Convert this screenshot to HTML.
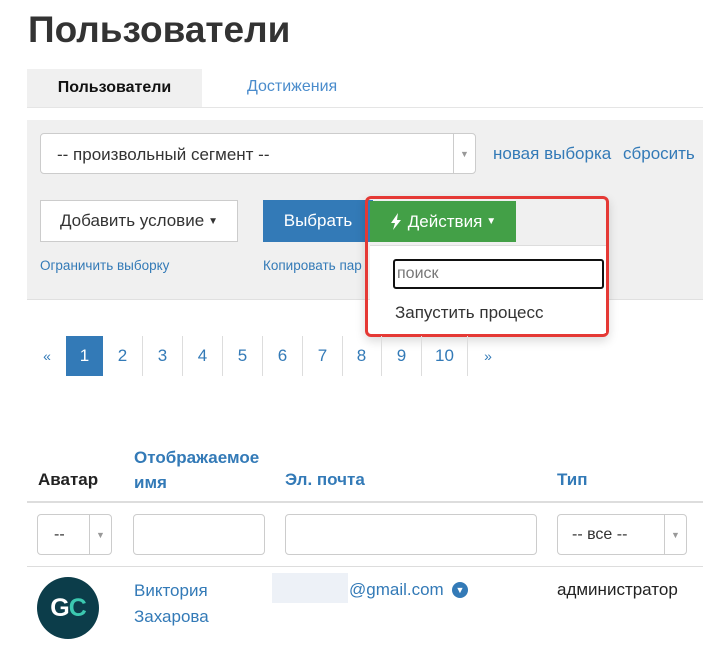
<!DOCTYPE html>
<html><head><meta charset="utf-8"><style>
*{box-sizing:border-box;margin:0;padding:0}
body{width:703px;height:649px;overflow:hidden;background:#fff;font-family:"Liberation Sans",sans-serif;position:relative;color:#333}
.a{position:absolute}
.blue{color:#337ab7}
.sel{position:absolute;background:#fff;border:1px solid #ccc;border-radius:4px}
.sel .ar{position:absolute;right:0;top:0;bottom:0;width:22px;border-left:1px solid #ccc;color:#999;font-size:9px;display:flex;align-items:center;justify-content:center}
.pg{position:absolute;top:336px;height:40px;width:40px;border-right:1px solid #ddd;color:#337ab7;font-size:17px;display:flex;align-items:center;justify-content:center}
</style></head><body>
<div class="a" style="left:28px;top:9px;font-size:37px;font-weight:bold;color:#333">Пользователи</div>
<div class="a" style="left:27px;top:69px;width:175px;height:38px;background:#f0f0f0;font-size:16px;font-weight:bold;color:#111;display:flex;align-items:center;justify-content:center">Пользователи</div>
<div class="a blue" style="left:247px;top:78px;font-size:16px;color:#4a8ccc">Достижения</div>
<div class="a" style="left:27px;top:107px;width:676px;height:1px;background:#e5e5e5"></div>
<div class="a" style="left:27px;top:120px;width:676px;height:180px;background:#f0f0f0;border-bottom:1px solid #e0e0e0"></div>
<div class="sel" style="left:40px;top:133px;width:436px;height:41px"><span class="a" style="left:16px;top:11px;font-size:17px;color:#333">-- произвольный сегмент --</span><div class="ar">▼</div></div>
<div class="a blue" style="left:493px;top:144px;font-size:17px">новая выборка</div>
<div class="a blue" style="left:623px;top:144px;font-size:17px;white-space:nowrap">сбросить</div>
<div class="a" style="left:40px;top:200px;width:198px;height:42px;background:#fff;border:1px solid #ccc;font-size:17px;color:#333;display:flex;align-items:center;justify-content:center">Добавить условие <span style="font-size:10px;margin-left:4px">▼</span></div>
<div class="a" style="left:263px;top:200px;width:110px;height:42px;background:#337ab7;color:#fff;font-size:17px;display:flex;align-items:center;justify-content:center">Выбрать</div>
<div class="a blue" style="left:40px;top:258px;font-size:13.5px">Ограничить выборку</div>
<div class="a blue" style="left:263px;top:258px;font-size:13.5px">Копировать пар</div>
<div class="a" style="left:365px;top:196px;width:244px;height:141px;border:3px solid #e53935;border-radius:6px;background:transparent;box-shadow:0 4px 10px rgba(0,0,0,.15)"></div>
<div class="a" style="left:370px;top:245px;width:236px;height:88px;background:#fff;border-top:1px solid #ddd"></div>
<div class="a" style="left:370px;top:201px;width:146px;height:41px;background:#43a047;color:#fff;font-size:17px;display:flex;align-items:center;justify-content:center"><svg width="12" height="17" viewBox="0 0 12 17" style="margin-right:6px"><path d="M8 0L1 10h4l-2 7 8-10H7z" fill="#fff"/></svg>Действия <span style="font-size:10px;margin-left:4px">▼</span></div>
<div class="a" style="left:393px;top:259px;width:211px;height:30px;border:2px solid #111;border-radius:3px;background:#fff;font-size:16px;color:#777;padding:4px 0 0 2px">поиск</div>
<div class="a" style="left:395px;top:303px;font-size:17px;color:#333">Запустить процесс</div>
<div class="pg" style="left:27px;color:#337ab7;border:none;font-size:14px">«</div>
<div class="pg" style="left:66px;width:37px;background:#337ab7;color:#fff;border:none">1</div>
<div class="pg" style="left:103px">2</div>
<div class="pg" style="left:143px">3</div>
<div class="pg" style="left:183px">4</div>
<div class="pg" style="left:223px">5</div>
<div class="pg" style="left:263px">6</div>
<div class="pg" style="left:303px">7</div>
<div class="pg" style="left:342px">8</div>
<div class="pg" style="left:382px">9</div>
<div class="pg" style="left:422px;width:46px">10</div>
<div class="pg" style="left:468px;border:none;font-size:14px">»</div>
<div class="a" style="left:38px;top:470px;font-size:17px;font-weight:bold;color:#222">Аватар</div>
<div class="a blue" style="left:134px;top:445px;font-size:17px;font-weight:bold;line-height:25px">Отображаемое<br>имя</div>
<div class="a blue" style="left:285px;top:470px;font-size:17px;font-weight:bold">Эл. почта</div>
<div class="a blue" style="left:557px;top:470px;font-size:17px;font-weight:bold">Тип</div>
<div class="a" style="left:27px;top:501px;width:676px;height:2px;background:#ddd"></div>
<div class="sel" style="left:37px;top:514px;width:75px;height:41px"><span class="a" style="left:16px;top:11px;font-size:16px">--</span><div class="ar">▼</div></div>
<div class="sel" style="left:133px;top:514px;width:132px;height:41px"></div>
<div class="sel" style="left:285px;top:514px;width:252px;height:41px"></div>
<div class="sel" style="left:557px;top:514px;width:130px;height:41px"><span class="a" style="left:14px;top:11px;font-size:16px">-- все --</span><div class="ar">▼</div></div>
<div class="a" style="left:27px;top:566px;width:676px;height:1px;background:#ddd"></div>
<div class="a" style="left:37px;top:577px;width:62px;height:62px;border-radius:50%;background:#0c3d4a;color:#fff;font-weight:bold;font-size:25px;display:flex;align-items:center;justify-content:center;letter-spacing:-1px">G<span style="color:#3cc9b0">C</span></div>
<div class="a blue" style="left:134px;top:578px;font-size:17px;line-height:26px">Виктория<br>Захарова</div>
<div class="a" style="left:272px;top:573px;width:76px;height:30px;background:#e8eef5;opacity:.8"></div>
<div class="a blue" style="left:349px;top:580px;font-size:17px">@gmail.com</div>
<div class="a" style="left:452px;top:582px;width:16px;height:16px;border-radius:50%;background:#337ab7;color:#fff;font-size:9px;display:flex;align-items:center;justify-content:center">▼</div>
<div class="a" style="left:557px;top:580px;font-size:17px;color:#222">администратор</div>
</body></html>
